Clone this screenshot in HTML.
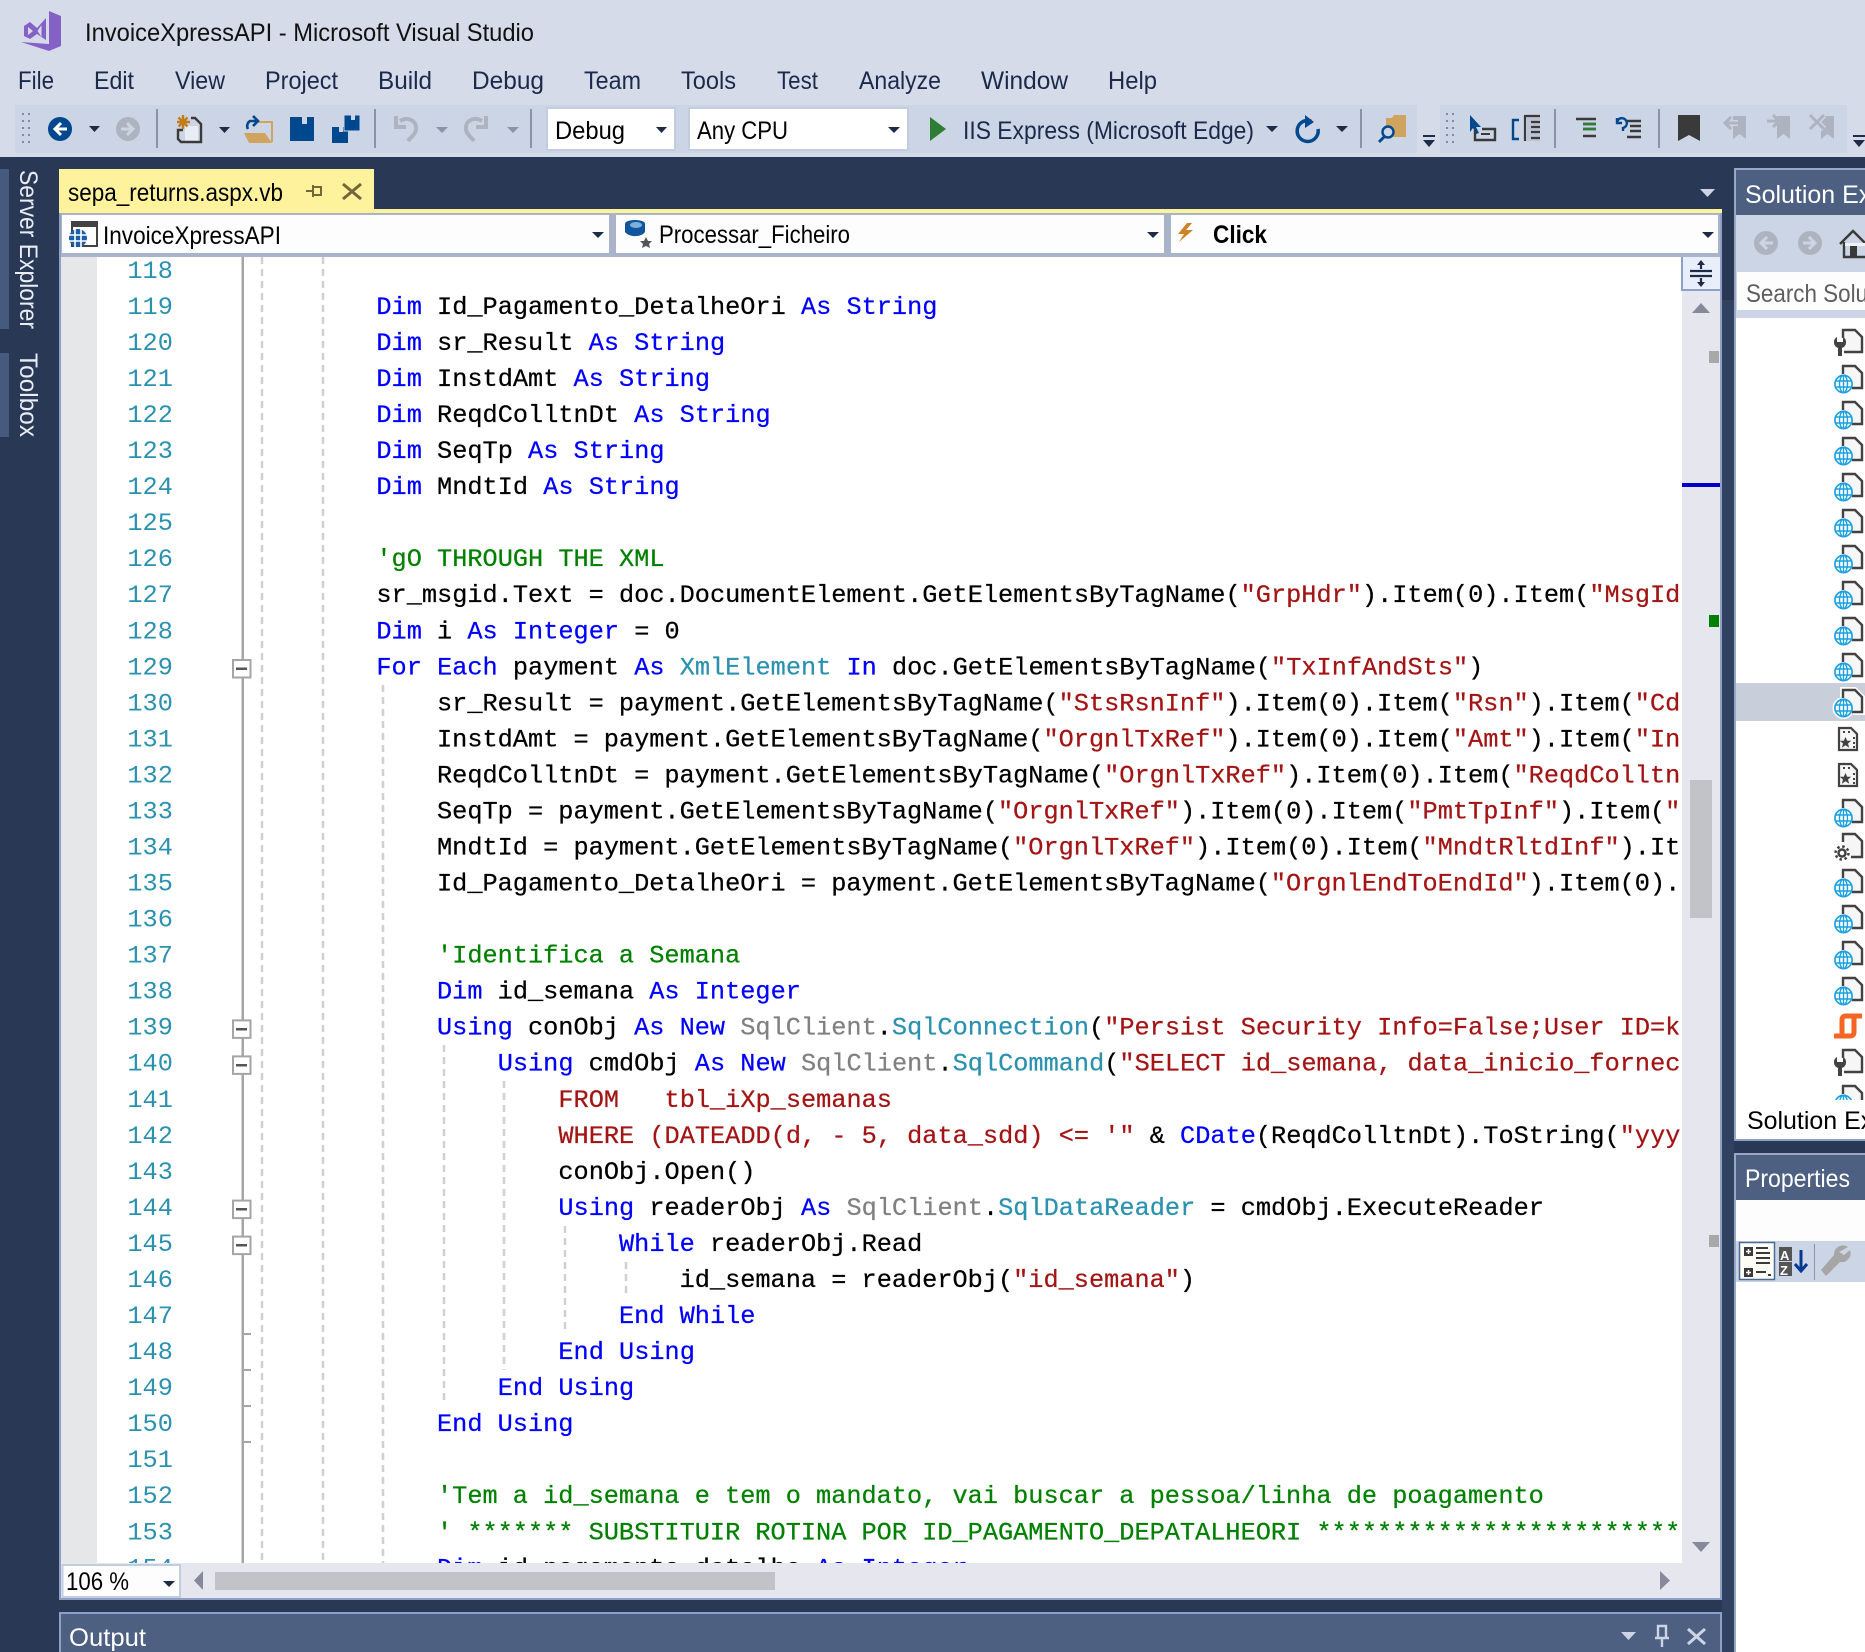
<!DOCTYPE html>
<html><head><meta charset="utf-8"><title>InvoiceXpressAPI - Microsoft Visual Studio</title>
<style>
html,body{margin:0;padding:0;background:#293955}
svg{display:block}
text{font-family:"Liberation Sans",sans-serif;font-size:25px;white-space:pre}
.m{fill:#1b2a4b}
.b{fill:#000}
.c{font-family:"Liberation Mono",monospace;font-size:25.27px;fill:#000;stroke:#000;stroke-width:.25px}
.n{font-family:"Liberation Mono",monospace;font-size:25.27px;fill:#2b91af}
.k{fill:#00f;stroke:#00f}.t{fill:#2b91af;stroke:#2b91af}.s{fill:#a31515;stroke:#a31515}.g{fill:#008000;stroke:#008000}.y{fill:#808080;stroke:#808080}
</style></head><body>
<svg xmlns="http://www.w3.org/2000/svg" xmlns:xlink="http://www.w3.org/1999/xlink" width="1865" height="1652" viewBox="0 0 1865 1652">
<defs>
<clipPath id="ed"><rect x="61" y="257" width="1620" height="1306"/></clipPath>
<clipPath id="tree"><rect x="1736" y="318" width="129" height="782"/></clipPath>
<g id="gl"><circle cx="9.500" cy="19" r="8.600" fill="#fff" stroke="#1ba1e2" stroke-width="1.700"/><ellipse cx="9.500" cy="19" rx="4" ry="8.600" fill="none" stroke="#1ba1e2" stroke-width="1.400"/><path d="M1 16h17M1 22h17M9.500 10.500v17" stroke="#1ba1e2" stroke-width="1.400" fill="none"/></g>
<g id="pg"><path d="M9 9V1h12l7 7v15H18" fill="#f6f6f6" stroke="#424242" stroke-width="2.400"/><use xlink:href="#gl"/></g>
<g id="wr"><path d="M9 9V1h12l7 7v15H10" fill="#f6f6f6" stroke="#424242" stroke-width="2.400"/><path d="M0 14a6 6 0 0 1 3-6v5h6V8a6 6 0 0 1 3 6 6 6 0 0 1-4 5v8H4v-8a6 6 0 0 1-4-5z" fill="#424242"/></g>
<g id="st"><path d="M1 1h12l6 6v16H1z" fill="#f6f6f6" stroke="#424242" stroke-width="2.200"/><path d="M7.500 10l1.700 3.800h4l-3.200 2.700 1.200 4.200-3.700-2.400-3.700 2.400 1.200-4.200-3.200-2.700h4z" fill="#424242"/><path d="M5 5h2M10 5h2M15 11h2M15 16h2M15 20h2" stroke="#424242" stroke-width="2"/></g>
<path id="bm" d="M0 0h13v23l-6.500-5-6.500 5z"/>
</defs>

<!-- base chrome -->
<rect width="1865" height="1652" fill="#293955"/>
<rect x="1722" y="300" width="12" height="1352" fill="#30425f"/>
<rect width="1865" height="157" fill="#d6dbe9"/>
<rect x="15" y="105" width="1402" height="48" fill="#ccd5e5"/>
<rect x="1440" y="105" width="407" height="48" fill="#ccd5e5"/>

<!-- title -->
<path d="M49 11l12 5v30l-12 5-28-9 28 2z" fill="#8661c5"/>
<path d="M46 18v22l-9-6-7 5-6-3V26l6-4 7 6z" fill="#8661c5"/>
<path d="M28 27l5 4-5 4zM41.500 25v12l-4-6z" fill="#d6dbe9"/>
<text x="85" y="41" fill="#111" textLength="449" lengthAdjust="spacingAndGlyphs">InvoiceXpressAPI - Microsoft Visual Studio</text>

<!-- menu -->
<g class="m">
<text class="m" x="18" y="89" textLength="36" lengthAdjust="spacingAndGlyphs">File</text>
<text class="m" x="94" y="89" textLength="40" lengthAdjust="spacingAndGlyphs">Edit</text>
<text class="m" x="175" y="89" textLength="50" lengthAdjust="spacingAndGlyphs">View</text>
<text class="m" x="265" y="89" textLength="73" lengthAdjust="spacingAndGlyphs">Project</text>
<text class="m" x="378" y="89" textLength="54" lengthAdjust="spacingAndGlyphs">Build</text>
<text class="m" x="472" y="89" textLength="72" lengthAdjust="spacingAndGlyphs">Debug</text>
<text class="m" x="584" y="89" textLength="57" lengthAdjust="spacingAndGlyphs">Team</text>
<text class="m" x="681" y="89" textLength="55" lengthAdjust="spacingAndGlyphs">Tools</text>
<text class="m" x="777" y="89" textLength="41" lengthAdjust="spacingAndGlyphs">Test</text>
<text class="m" x="859" y="89" textLength="82" lengthAdjust="spacingAndGlyphs">Analyze</text>
<text class="m" x="981" y="89" textLength="87" lengthAdjust="spacingAndGlyphs">Window</text>
<text class="m" x="1108" y="89" textLength="49" lengthAdjust="spacingAndGlyphs">Help</text>
</g>

<!-- toolbar 1 -->
<path d="M23 113v34M29 113v34" stroke="#7d8aa3" stroke-width="2" stroke-dasharray="2 5" fill="none"/>
<circle cx="60" cy="129" r="12" fill="#00488e"/><path d="M67 129H55M61 123l-6 6 6 6" stroke="#fff" stroke-width="3" fill="none"/>
<path d="M89 126h11l-5.500 6z" fill="#1e2b48"/>
<circle cx="128" cy="129" r="12" fill="#aeb4bf"/><path d="M121 129h12M127 123l6 6-6 6" stroke="#ccd5e5" stroke-width="3" fill="none"/>
<rect x="156" y="109" width="2" height="39" fill="#8a94a7"/>
<path d="M185 126h13v15h-13z" fill="#e8ecf4"/>
<path d="M191 118h4l6 6v18h-14" fill="none" stroke="#3a3a3a" stroke-width="2.400"/>
<path d="M183 130h-5v9l3 3h6" fill="none" stroke="#3a3a3a" stroke-width="2.400"/>
<path d="M183 115v14M177 122h13M178.500 117.500l9 9M187.500 117.500l-9 9" stroke="#c27d1a" stroke-width="2.400" fill="none"/>
<path d="M219 127h11l-5.500 6z" fill="#1e2b48"/>
<path d="M258 122h14v20" fill="none" stroke="#d0a45e" stroke-width="2"/><path d="M258 122h14v18l-6-8h-8z" fill="#ccd5e5"/><path d="M244 133h21l7 10h-23z" fill="#d0a45e"/><path d="M258 122h14v20" fill="none" stroke="#d0a45e" stroke-width="2"/>
<path d="M248 129a6 6 0 0 1 2-8h6M253 116l5 5-5 5" fill="none" stroke="#00488e" stroke-width="2.600"/>
<path d="M290 117h24v24h-24z" fill="#00488e"/><rect x="302" y="117" width="5" height="7" fill="#ccd5e5"/>
<path d="M332 127h16v16h-16z" fill="#00488e"/><rect x="339" y="127" width="4" height="5" fill="#ccd5e5"/>
<path d="M344 115h16v16h-16z" fill="#00488e" stroke="#ccd5e5" stroke-width="1"/><rect x="351" y="115" width="4" height="5" fill="#ccd5e5"/>
<rect x="374" y="109" width="2" height="39" fill="#8a94a7"/>
<path d="M400 121c8-5 17 0 16 8 0 5-6 9-8 12M396 116v11h10" fill="none" stroke="#aeb4bf" stroke-width="4"/>
<path d="M436 127h12l-6 6z" fill="#8a94a7"/>
<path d="M482 121c-8-5-17 0-16 8 0 5 6 9 8 12M486 116v11h-10" fill="none" stroke="#aeb4bf" stroke-width="4"/>
<path d="M507 127h12l-6 6z" fill="#8a94a7"/>
<rect x="530" y="109" width="2" height="39" fill="#8a94a7"/>

<!-- combos -->
<rect x="547" y="108" width="128" height="42" fill="#fff" stroke="#c3cde0" stroke-width="2"/>
<text class="b" x="555" y="139" textLength="70" lengthAdjust="spacingAndGlyphs">Debug</text>
<path d="M656 127h11l-5.500 6z" fill="#1e2b48"/>
<rect x="689" y="108" width="219" height="42" fill="#fff" stroke="#c3cde0" stroke-width="2"/>
<text class="b" x="697" y="139" textLength="91" lengthAdjust="spacingAndGlyphs">Any CPU</text>
<path d="M888 127h12l-6 6z" fill="#1e2b48"/>
<path d="M930 117l16 12-16 12z" fill="#2f7d32"/>
<text class="m" x="963" y="139" textLength="291" lengthAdjust="spacingAndGlyphs" fill="#2a3550">IIS Express (Microsoft Edge)</text>
<path d="M1266 126h12l-6 6z" fill="#1e2b48"/>
<path d="M1311 121a10.500 10.500 0 1 0 7 8" fill="none" stroke="#00488e" stroke-width="3.500"/><path d="M1305 115l9 7-9 6z" fill="#00488e"/>
<path d="M1336 126h12l-6 6z" fill="#1e2b48"/>
<rect x="1360" y="109" width="2" height="39" fill="#8a94a7"/>
<path d="M1386 118h6l2-3h12v22h-20z" fill="#d0a45e"/><circle cx="1388" cy="132" r="5.500" fill="#ccd5e5" stroke="#00488e" stroke-width="2.400"/><path d="M1384 137l-5 5" stroke="#00488e" stroke-width="3"/>
<path d="M1423 135h12v2h-12zM1423 140h12l-6 7z" fill="#1e2b48"/>

<!-- toolbar 2 -->
<path d="M1447 113v32M1453 113v32" stroke="#7d8aa3" stroke-width="2" stroke-dasharray="2 5" fill="none"/>
<path d="M1470 115l11 12-5 0 3 6-3 1-3-6-3 4z" fill="#00488e"/><path d="M1475 130v10h20v-11h-13" fill="none" stroke="#3a3a3a" stroke-width="2.400"/><path d="M1481 134h9" stroke="#3a3a3a" stroke-width="2"/>
<path d="M1519 120h-6v19h6" fill="none" stroke="#00488e" stroke-width="2.400"/><path d="M1524 115h16v26h-13v-22" fill="#bcc4d4"/><path d="M1524 116h16M1531 122h9M1531 127h9M1531 132h9M1531 138h9M1525 116v25" stroke="#3a3a3a" stroke-width="2.200" fill="none"/>
<rect x="1554" y="109" width="2" height="39" fill="#8a94a7"/>
<path d="M1576 119h20M1583 124h13M1583 129h13M1583 136h13" stroke="#3a3a3a" stroke-width="2.400"/><path d="M1583 124h13M1583 129h13" stroke="#2f7d32" stroke-width="2.400"/>
<path d="M1627 121h14M1630 126h11M1630 131h11M1627 137h14" stroke="#3a3a3a" stroke-width="2.400"/><path d="M1617 122a5 5 0 1 1 6 6v3M1617 118v5h5" fill="none" stroke="#00488e" stroke-width="2.400"/>
<rect x="1658" y="109" width="2" height="39" fill="#8a94a7"/>
<path d="M1678 115h22v26l-11-6-11 6z" fill="#3a3a3a"/>
<g fill="#aeb4bf"><use xlink:href="#bm" x="1733" y="116"/><use xlink:href="#bm" x="1777" y="116"/><use xlink:href="#bm" x="1821" y="116"/></g>
<g fill="none" stroke="#ccd5e5" stroke-width="6"><path d="M1738 123h-12M1767 121h12M1810 115l14 14M1824 115l-14 14"/></g>
<path d="M1738 123h-12M1731 117l-6 6 6 6M1767 121h12M1773 115l6 6-6 6M1810 115l14 14M1824 115l-14 14" stroke="#aeb4bf" stroke-width="3" fill="none"/>
<path d="M1853 135h12v2h-12zM1853 140h12l-6 7z" fill="#1e2b48"/>

<!-- left tool tabs -->
<rect x="0" y="169" width="9" height="160" fill="#465a7d"/>
<rect x="0" y="353" width="9" height="84" fill="#465a7d"/>
<text transform="translate(20,170) rotate(90)" fill="#e8ecf4" textLength="159" lengthAdjust="spacingAndGlyphs">Server Explorer</text>
<text transform="translate(20,353) rotate(90)" fill="#e8ecf4" textLength="84" lengthAdjust="spacingAndGlyphs">Toolbox</text>

<!-- doc tab -->
<rect x="59" y="169" width="315" height="44" fill="#fff29d"/>
<rect x="59" y="209" width="1663" height="4" fill="#fff29d"/>
<text class="b" x="68" y="201" textLength="215" lengthAdjust="spacingAndGlyphs">sepa_returns.aspx.vb</text>
<path d="M313 185v12M313 187h8v8h-8M306 191h7" fill="none" stroke="#75663a" stroke-width="2"/>
<path d="M343 184l18 15M361 184l-18 15" stroke="#75663a" stroke-width="3"/>
<path d="M1700 189h15l-7.500 8z" fill="#ccd5e5"/>

<!-- editor frame -->
<rect x="59" y="213" width="1663" height="1387" fill="#8f9fc8"/>
<rect x="61" y="213" width="1659" height="44" fill="#a9b4c9"/>
<rect x="62" y="215" width="547" height="38" fill="#fdfdfd"/>
<rect x="616" y="215" width="548" height="38" fill="#fdfdfd"/>
<rect x="1171" y="215" width="547" height="38" fill="#fdfdfd"/>
<rect x="72" y="222" width="25" height="24" fill="#fdfdfd" stroke="#424242" stroke-width="2"/><rect x="71" y="221" width="26" height="6" fill="#424242"/>
<circle cx="78" cy="238" r="9" fill="#1a5fa8"/><path d="M69 235h18M69 241h18M75 229v18M81 229v18" stroke="#fff" stroke-width="1.600"/>
<text class="b" x="103" y="244" textLength="178" lengthAdjust="spacingAndGlyphs">InvoiceXpressAPI</text>
<path d="M592 232h12l-6 6z" fill="#1e2b48"/>
<path d="M625 224c0-3 6-4 10-4s10 1 10 4v8c-3 5-15 6-20 0z" fill="#11559d"/><ellipse cx="636" cy="225" rx="6" ry="3" fill="#7db0df"/>
<path d="M646 237l2 4h4l-3 3 1 4-4-2-4 2 1-4-3-3h4z" fill="#555"/>
<text class="b" x="659" y="243" textLength="191" lengthAdjust="spacingAndGlyphs">Processar_Ficheiro</text>
<path d="M1147 232h12l-6 6z" fill="#1e2b48"/>
<path d="M1187 223l-9 11h6l-5 8 14-12h-7l6-7z" fill="#cb8229"/>
<text class="b" x="1213" y="243" font-weight="bold" textLength="54" lengthAdjust="spacingAndGlyphs">Click</text>
<path d="M1702 232h12l-6 6z" fill="#1e2b48"/>

<!-- editor body -->
<rect x="61" y="257" width="1659" height="1341" fill="#e6e7ee"/>
<rect x="61" y="257" width="36" height="1306" fill="#e6e7e8"/>
<rect x="97" y="257" width="1585" height="1306" fill="#fff"/>

<!-- guides -->
<g stroke="#d0d0d0" stroke-width="2.500" stroke-dasharray="7 5" fill="none">
<path d="M262 257V1563M323 257V1563M383 685V1563M444 1045V1400M504 1081V1370M565 1226V1334M626 1262V1298"/>
</g>
<!-- outlining -->
<rect x="241.500" y="257" width="2.500" height="1306" fill="#a5a5a5"/>
<g fill="#a5a5a5"><rect x="243" y="1333" width="8" height="2"/><rect x="243" y="1369" width="8" height="2"/><rect x="243" y="1405" width="8" height="2"/><rect x="243" y="1441" width="8" height="2"/></g>
<g fill="#fff" stroke="#a5a5a5" stroke-width="2">
<rect x="233" y="660" width="17.500" height="17.500"/>
<rect x="233" y="1020.400" width="17.500" height="17.500"/>
<rect x="233" y="1056.400" width="17.500" height="17.500"/>
<rect x="233" y="1200.600" width="17.500" height="17.500"/>
<rect x="233" y="1236.600" width="17.500" height="17.500"/>
</g>
<g fill="#555"><rect x="236" y="667.500" width="11" height="2.500"/><rect x="236" y="1028" width="11" height="2.500"/><rect x="236" y="1064" width="11" height="2.500"/><rect x="236" y="1208" width="11" height="2.500"/><rect x="236" y="1244" width="11" height="2.500"/></g>

<!-- code -->
<g clip-path="url(#ed)"><g transform="translate(0.4,-0.7)">
<text class="n" x="127" y="278.600">118</text><text class="n" x="127" y="314.600">119</text><text class="n" x="127" y="350.600">120</text><text class="n" x="127" y="386.700">121</text><text class="n" x="127" y="422.700">122</text><text class="n" x="127" y="458.800">123</text><text class="n" x="127" y="494.800">124</text><text class="n" x="127" y="530.800">125</text><text class="n" x="127" y="566.900">126</text><text class="n" x="127" y="602.900">127</text><text class="n" x="127" y="639">128</text><text class="n" x="127" y="675">129</text><text class="n" x="127" y="711">130</text><text class="n" x="127" y="747.100">131</text><text class="n" x="127" y="783.100">132</text><text class="n" x="127" y="819.200">133</text><text class="n" x="127" y="855.200">134</text><text class="n" x="127" y="891.200">135</text><text class="n" x="127" y="927.300">136</text><text class="n" x="127" y="963.300">137</text><text class="n" x="127" y="999.400">138</text><text class="n" x="127" y="1035.400">139</text><text class="n" x="127" y="1071.400">140</text><text class="n" x="127" y="1107.500">141</text><text class="n" x="127" y="1143.500">142</text><text class="n" x="127" y="1179.600">143</text><text class="n" x="127" y="1215.600">144</text><text class="n" x="127" y="1251.600">145</text><text class="n" x="127" y="1287.700">146</text><text class="n" x="127" y="1323.700">147</text><text class="n" x="127" y="1359.800">148</text><text class="n" x="127" y="1395.800">149</text><text class="n" x="127" y="1431.800">150</text><text class="n" x="127" y="1467.900">151</text><text class="n" x="127" y="1503.900">152</text><text class="n" x="127" y="1540">153</text><text class="n" x="127" y="1576">154</text>

<text class="c" x="376" y="314.600"><tspan class="k">Dim</tspan> Id_Pagamento_DetalheOri <tspan class="k">As</tspan> <tspan class="k">String</tspan></text>
<text class="c" x="376" y="350.600"><tspan class="k">Dim</tspan> sr_Result <tspan class="k">As</tspan> <tspan class="k">String</tspan></text>
<text class="c" x="376" y="386.700"><tspan class="k">Dim</tspan> InstdAmt <tspan class="k">As</tspan> <tspan class="k">String</tspan></text>
<text class="c" x="376" y="422.700"><tspan class="k">Dim</tspan> ReqdColltnDt <tspan class="k">As</tspan> <tspan class="k">String</tspan></text>
<text class="c" x="376" y="458.800"><tspan class="k">Dim</tspan> SeqTp <tspan class="k">As</tspan> <tspan class="k">String</tspan></text>
<text class="c" x="376" y="494.800"><tspan class="k">Dim</tspan> MndtId <tspan class="k">As</tspan> <tspan class="k">String</tspan></text>
<text class="c g" x="376" y="566.900">'gO THROUGH THE XML</text>
<text class="c" x="376" y="602.900">sr_msgid.Text = doc.DocumentElement.GetElementsByTagName(<tspan class="s">"GrpHdr"</tspan>).Item(0).Item(<tspan class="s">"MsgId"</tspan>).InnerText</text>
<text class="c" x="376" y="639"><tspan class="k">Dim</tspan> i <tspan class="k">As</tspan> <tspan class="k">Integer</tspan> = 0</text>
<text class="c" x="376" y="675"><tspan class="k">For</tspan> <tspan class="k">Each</tspan> payment <tspan class="k">As</tspan> <tspan class="t">XmlElement</tspan> <tspan class="k">In</tspan> doc.GetElementsByTagName(<tspan class="s">"TxInfAndSts"</tspan>)</text>
<text class="c" x="436.600" y="711">sr_Result = payment.GetElementsByTagName(<tspan class="s">"StsRsnInf"</tspan>).Item(0).Item(<tspan class="s">"Rsn"</tspan>).Item(<tspan class="s">"Cd"</tspan>)</text>
<text class="c" x="436.600" y="747.100">InstdAmt = payment.GetElementsByTagName(<tspan class="s">"OrgnlTxRef"</tspan>).Item(0).Item(<tspan class="s">"Amt"</tspan>).Item(<tspan class="s">"InstdAmt"</tspan>)</text>
<text class="c" x="436.600" y="783.100">ReqdColltnDt = payment.GetElementsByTagName(<tspan class="s">"OrgnlTxRef"</tspan>).Item(0).Item(<tspan class="s">"ReqdColltnDt"</tspan>)</text>
<text class="c" x="436.600" y="819.200">SeqTp = payment.GetElementsByTagName(<tspan class="s">"OrgnlTxRef"</tspan>).Item(0).Item(<tspan class="s">"PmtTpInf"</tspan>).Item(<tspan class="s">"SeqTp"</tspan>)</text>
<text class="c" x="436.600" y="855.200">MndtId = payment.GetElementsByTagName(<tspan class="s">"OrgnlTxRef"</tspan>).Item(0).Item(<tspan class="s">"MndtRltdInf"</tspan>).Item(0)</text>
<text class="c" x="436.600" y="891.200">Id_Pagamento_DetalheOri = payment.GetElementsByTagName(<tspan class="s">"OrgnlEndToEndId"</tspan>).Item(0).InnerText</text>
<text class="c g" x="436.600" y="963.300">'Identifica a Semana</text>
<text class="c" x="436.600" y="999.400"><tspan class="k">Dim</tspan> id_semana <tspan class="k">As</tspan> <tspan class="k">Integer</tspan></text>
<text class="c" x="436.600" y="1035.400"><tspan class="k">Using</tspan> conObj <tspan class="k">As</tspan> <tspan class="k">New</tspan> <tspan class="y">SqlClient</tspan>.<tspan class="t">SqlConnection</tspan>(<tspan class="s">"Persist Security Info=False;User ID=k</tspan></text>
<text class="c" x="497.300" y="1071.400"><tspan class="k">Using</tspan> cmdObj <tspan class="k">As</tspan> <tspan class="k">New</tspan> <tspan class="y">SqlClient</tspan>.<tspan class="t">SqlCommand</tspan>(<tspan class="s">"SELECT id_semana, data_inicio_fornec</tspan></text>
<text class="c s" x="558" y="1107.500">FROM   tbl_iXp_semanas</text>
<text class="c" x="558" y="1143.500"><tspan class="s">WHERE (DATEADD(d, - 5, data_sdd) &lt;= '"</tspan> &amp; <tspan class="k">CDate</tspan>(ReqdColltnDt).ToString(<tspan class="s">"yyyy-MM-dd"</tspan>)</text>
<text class="c" x="558" y="1179.600">conObj.Open()</text>
<text class="c" x="558" y="1215.600"><tspan class="k">Using</tspan> readerObj <tspan class="k">As</tspan> <tspan class="y">SqlClient</tspan>.<tspan class="t">SqlDataReader</tspan> = cmdObj.ExecuteReader</text>
<text class="c" x="618.600" y="1251.600"><tspan class="k">While</tspan> readerObj.Read</text>
<text class="c" x="679.200" y="1287.700">id_semana = readerObj(<tspan class="s">"id_semana"</tspan>)</text>
<text class="c k" x="618.600" y="1323.700">End While</text>
<text class="c k" x="558" y="1359.800">End Using</text>
<text class="c k" x="497.300" y="1395.800">End Using</text>
<text class="c k" x="436.600" y="1431.800">End Using</text>
<text class="c g" x="436.600" y="1503.900">'Tem a id_semana e tem o mandato, vai buscar a pessoa/linha de poagamento</text>
<text class="c g" x="436.600" y="1540">' ******* SUBSTITUIR ROTINA POR ID_PAGAMENTO_DEPATALHEORI ****************************</text>
<text class="c" x="436.600" y="1576"><tspan class="k">Dim</tspan> id_pagamento_detalhe <tspan class="k">As</tspan> <tspan class="k">Integer</tspan></text>
</g></g>

<!-- vertical scrollbar -->
<rect x="1682" y="257" width="38" height="33" fill="#e8effa"/>
<path d="M1682 257v33h38" fill="none" stroke="#8fa0c6" stroke-width="2"/>
<path d="M1690 271h22M1690 276h22M1701 263v6M1701 278v6" stroke="#1e2b48" stroke-width="2.200" fill="none"/>
<path d="M1697 265l4-5 4 5zM1697 282l4 5 4-5z" fill="#1e2b48"/>
<path d="M1692 313l9-10 9 10z" fill="#868999"/>
<rect x="1709" y="351" width="10" height="12" fill="#a8a8a8"/>
<rect x="1682" y="483" width="38" height="4" fill="#0000c8"/>
<rect x="1709" y="615" width="10" height="12" fill="#008000"/>
<rect x="1690" y="780" width="22" height="138" fill="#c2c3c9"/>
<rect x="1709" y="1235" width="10" height="12" fill="#a8a8a8"/>
<path d="M1692 1542h18l-9 10z" fill="#868999"/>

<!-- horizontal scrollbar -->
<rect x="62.500" y="1565" width="117.500" height="32" fill="#fdfdfd" stroke="#c3cde0" stroke-width="2"/>
<text class="b" x="66" y="1590" textLength="63" lengthAdjust="spacingAndGlyphs">106 %</text>
<path d="M163 1581h12l-6 6z" fill="#1e2b48"/>
<path d="M203 1571v19l-9-9.500z" fill="#868999"/>
<rect x="215" y="1572" width="560" height="18" fill="#c2c3c9"/>
<path d="M1660 1571v19l10-9.500z" fill="#868999"/>

<!-- output -->
<rect x="59" y="1612" width="1663" height="40" fill="#8f9fc8"/>
<rect x="61" y="1614" width="1659" height="38" fill="#4d6082"/>
<text x="69" y="1646" fill="#fff" textLength="77" lengthAdjust="spacingAndGlyphs">Output</text>
<path d="M1621 1632h15l-7.500 8z" fill="#ccd5e5"/>
<path d="M1658 1626h8v12h-8zM1655 1638h14M1662 1638v9" fill="none" stroke="#ccd5e5" stroke-width="2.400"/>
<path d="M1688 1629l17 15M1705 1629l-17 15" stroke="#ccd5e5" stroke-width="3"/>

<!-- right panels -->
<rect x="1734" y="1100" width="131" height="40" fill="#fff"/>
<rect x="1734" y="168" width="131" height="973" fill="#9aa6c4"/>
<rect x="1736" y="170" width="129" height="45" fill="#4d6082"/>
<text x="1745" y="203" fill="#fff" textLength="190" lengthAdjust="spacingAndGlyphs">Solution Explorer</text>
<rect x="1736" y="215" width="129" height="103" fill="#ccd5e5"/>
<circle cx="1766" cy="243" r="12" fill="#aeb4bf"/><path d="M1773 243h-12M1767 237l-6 6 6 6" stroke="#ccd5e5" stroke-width="3" fill="none"/>
<circle cx="1810" cy="243" r="12" fill="#aeb4bf"/><path d="M1803 243h12M1809 237l6 6-6 6" stroke="#ccd5e5" stroke-width="3" fill="none"/>
<path d="M1840 244l13-13 12 12M1844 242v15h21" fill="none" stroke="#3a3a3a" stroke-width="2.400"/><rect x="1850" y="246" width="7" height="11" fill="#3a3a3a"/><rect x="1845" y="243" width="20" height="3" fill="#f0f2f6"/>
<rect x="1737" y="272" width="128" height="38" fill="#fdfdfd"/>
<text x="1746" y="302" fill="#5e5e5e" textLength="122" lengthAdjust="spacingAndGlyphs">Search Solu</text>
<rect x="1736" y="318" width="129" height="821" fill="#fff"/>
<rect x="1736" y="683" width="129" height="38" fill="#c9cedb"/>
<g clip-path="url(#tree)">
<use xlink:href="#wr" x="1834" y="329"/>
<use xlink:href="#pg" x="1834" y="365"/><use xlink:href="#pg" x="1834" y="401"/><use xlink:href="#pg" x="1834" y="437"/><use xlink:href="#pg" x="1834" y="473"/><use xlink:href="#pg" x="1834" y="509"/><use xlink:href="#pg" x="1834" y="545"/><use xlink:href="#pg" x="1834" y="581"/><use xlink:href="#pg" x="1834" y="617"/><use xlink:href="#pg" x="1834" y="653"/>
<path d="M1842 697v-8h13l8 8v16h-10" fill="#fff" stroke="#fff" stroke-width="4"/><circle cx="1843.500" cy="708" r="11" fill="#fff"/><use xlink:href="#pg" x="1834" y="689"/>
<use xlink:href="#st" x="1838" y="727"/><use xlink:href="#st" x="1838" y="763"/>
<use xlink:href="#pg" x="1834" y="799"/>
<path d="M1843 842V834h12l7 7v16h-11" fill="#f6f6f6" stroke="#424242" stroke-width="2.400"/>
<circle cx="1842" cy="853" r="8" fill="#fff"/><circle cx="1842" cy="853" r="3.500" fill="none" stroke="#424242" stroke-width="2.500"/><circle cx="1842" cy="853" r="6.500" fill="none" stroke="#424242" stroke-width="2.500" stroke-dasharray="2.500 2.600"/>
<use xlink:href="#pg" x="1834" y="869"/><use xlink:href="#pg" x="1834" y="905"/><use xlink:href="#pg" x="1834" y="941"/><use xlink:href="#pg" x="1834" y="977"/>
<path d="M1862 1016H1846q-4 0-4 4v15M1834 1036h16q4 0 4-4v-14" fill="none" stroke="#f26522" stroke-width="5"/>
<use xlink:href="#wr" x="1834" y="1049"/>
<use xlink:href="#pg" x="1834" y="1085"/>
</g>
<text class="b" x="1747" y="1129" textLength="190" lengthAdjust="spacingAndGlyphs">Solution Explorer</text>
<rect x="1734" y="1139" width="131" height="2" fill="#8fa0c6"/>

<rect x="1734" y="1153" width="131" height="499" fill="#9aa6c4"/>
<rect x="1736" y="1155" width="129" height="45" fill="#4d6082"/>
<text x="1745" y="1187" fill="#fff" textLength="105" lengthAdjust="spacingAndGlyphs">Properties</text>
<rect x="1736" y="1200" width="129" height="452" fill="#fff"/>
<rect x="1736" y="1200" width="129" height="41" fill="#fdfdfd"/>
<rect x="1736" y="1241" width="129" height="41" fill="#ccd5e5"/>
<rect x="1739.500" y="1242.500" width="35" height="37" fill="#fdfdf5" stroke="#4a6a9a" stroke-width="1.500"/>
<g fill="#3a3a3a"><rect x="1744" y="1247" width="9" height="9"/><rect x="1744" y="1268" width="9" height="9"/></g>
<path d="M1756 1248h12M1756 1253h14M1756 1258h14M1756 1263h14M1756 1272h10M1768 1275h3" stroke="#3a3a3a" stroke-width="2"/>
<path d="M1746 1251.500h5M1748.500 1249v5M1746 1272.500h5M1748.500 1270v5" stroke="#fff" stroke-width="1.500"/>
<rect x="1779" y="1247" width="13" height="14" fill="#555"/><rect x="1779" y="1262" width="13" height="14" fill="#555"/>
<text x="1780" y="1260" fill="#fff" style="font-size:13px;font-weight:bold">A</text><text x="1780" y="1275" fill="#fff" style="font-size:13px;font-weight:bold">Z</text>
<path d="M1801 1250v20M1795 1264l6 7 6-7" fill="none" stroke="#00398e" stroke-width="3"/>
<rect x="1814" y="1244" width="1" height="36" fill="#8a94a7"/>
<path d="M1848 1247a9 9 0 0 0-14 8l-13 15 5 6 14-14a9 9 0 0 0 10-12l-6 5-5-3z" fill="#a6a6a6"/>
</svg>
</body></html>
